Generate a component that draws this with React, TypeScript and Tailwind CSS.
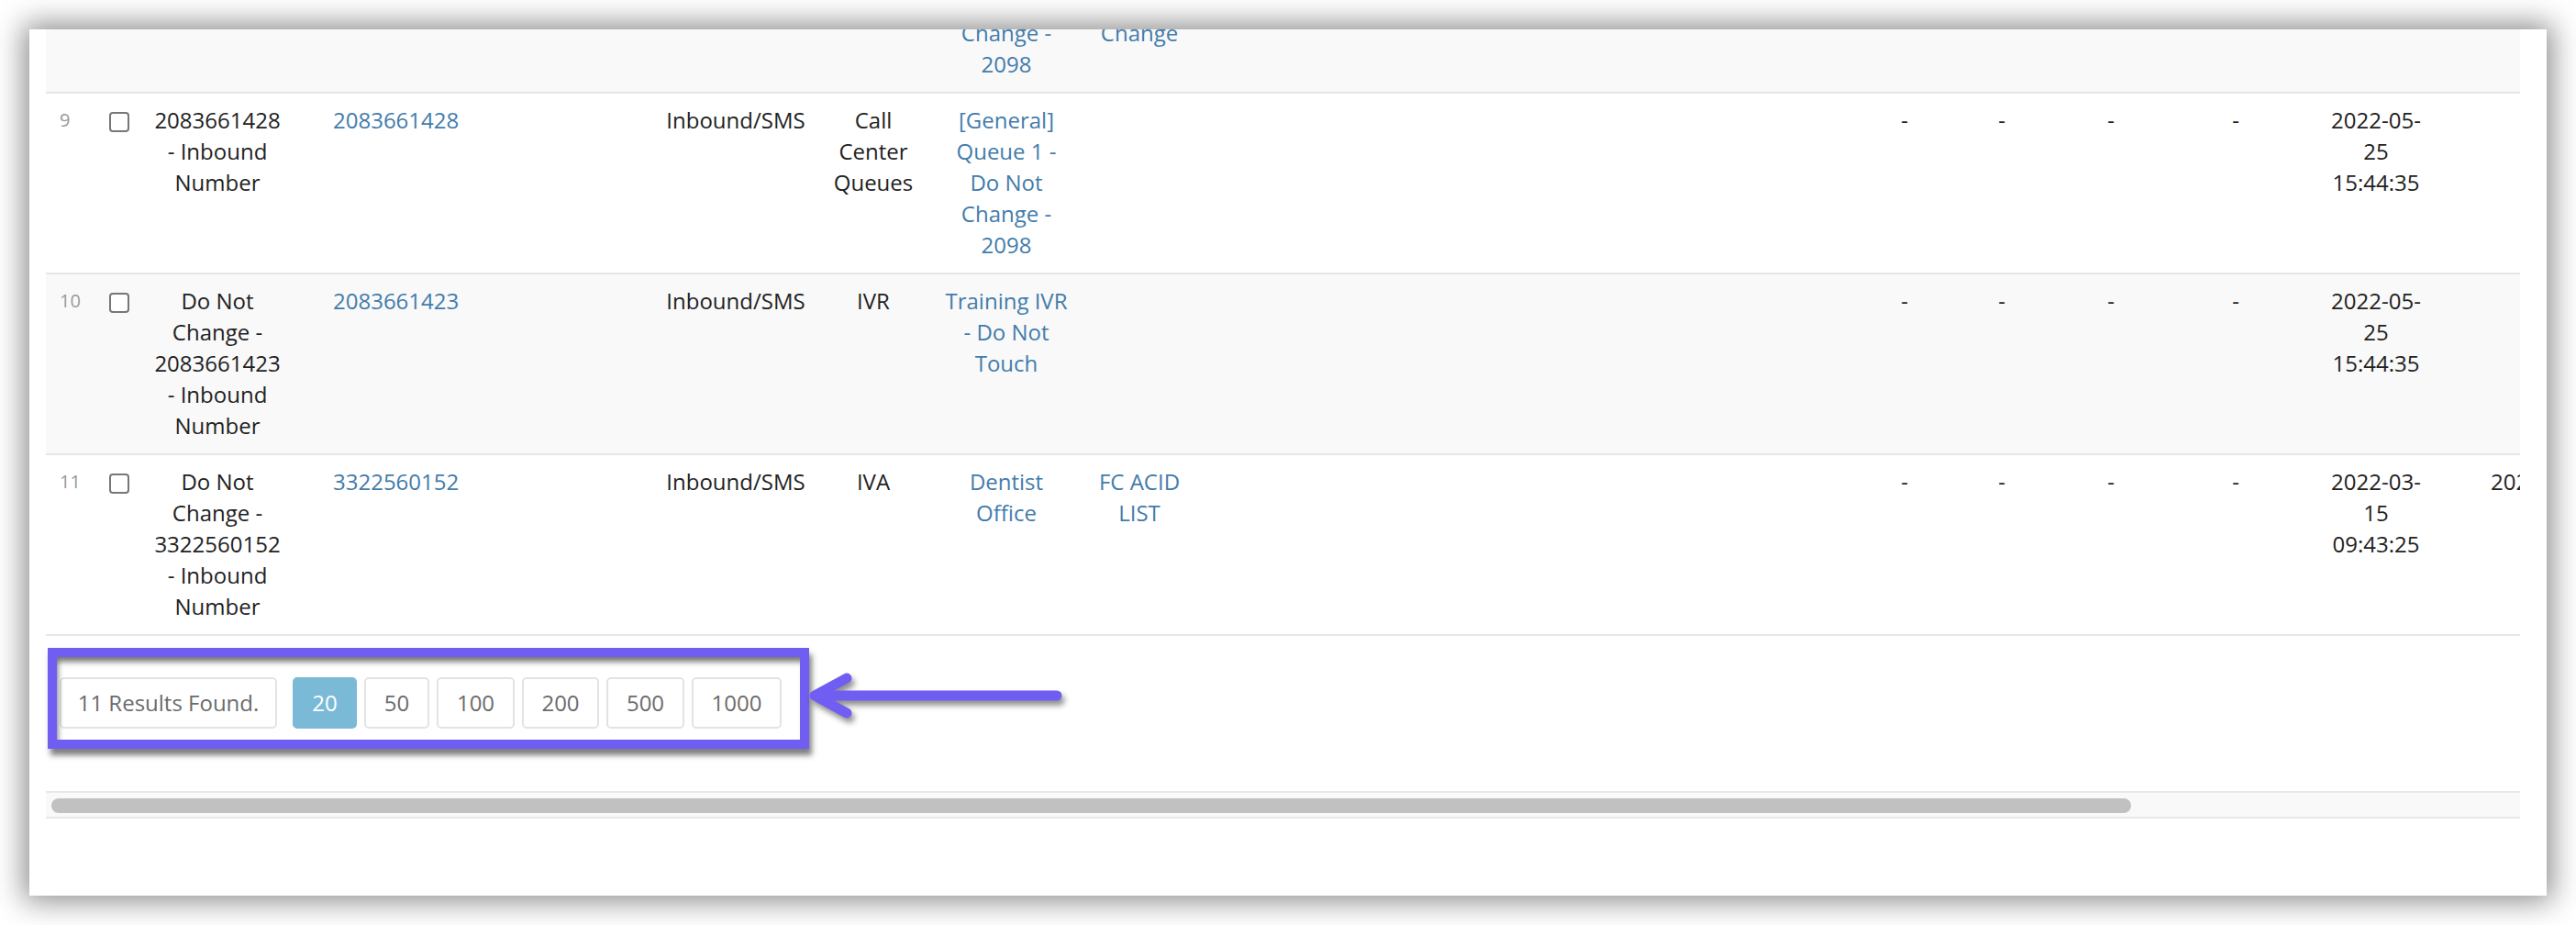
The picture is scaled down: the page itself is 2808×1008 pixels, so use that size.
type Row = {
  idx: string;
  name: string[];
  link: string;
  dir: string;
  type: string[];
  target: string[];
  list: string[];
  date: string[];
  date2: string[];
};

const rows: Row[] = [
  {
    idx: "8",
    name: ["2083661430", "- Inbound", "Number"],
    link: "2083661430",
    dir: "Inbound/SMS",
    type: ["Call", "Center", "Queues"],
    target: ["[General]", "Queue 2 -", "Do Not", "Change -", "2098"],
    list: ["[General]", "Queue 1 -", "Do Not", "Change"],
    date: ["2022-05-", "25", "15:44:35"],
    date2: [],
  },
  {
    idx: "9",
    name: ["2083661428", "- Inbound", "Number"],
    link: "2083661428",
    dir: "Inbound/SMS",
    type: ["Call", "Center", "Queues"],
    target: ["[General]", "Queue 1 -", "Do Not", "Change -", "2098"],
    list: [],
    date: ["2022-05-", "25", "15:44:35"],
    date2: [],
  },
  {
    idx: "10",
    name: ["Do Not", "Change -", "2083661423", "- Inbound", "Number"],
    link: "2083661423",
    dir: "Inbound/SMS",
    type: ["IVR"],
    target: ["Training IVR", "- Do Not", "Touch"],
    list: [],
    date: ["2022-05-", "25", "15:44:35"],
    date2: [],
  },
  {
    idx: "11",
    name: ["Do Not", "Change -", "3322560152", "- Inbound", "Number"],
    link: "3322560152",
    dir: "Inbound/SMS",
    type: ["IVA"],
    target: ["Dentist", "Office"],
    list: ["FC ACID", "LIST"],
    date: ["2022-03-", "15", "09:43:25"],
    date2: ["2022-03-15 09:43:25"],
  },
];

const pageSizes = [
  { label: "20", w: "w-[70px]", active: true },
  { label: "50", w: "w-[71px]", active: false },
  { label: "100", w: "w-[85px]", active: false },
  { label: "200", w: "w-[84px]", active: false },
  { label: "500", w: "w-[85px]", active: false },
  { label: "1000", w: "w-[98px]", active: false },
];

function Lines({ lines }: { lines: string[] }) {
  return (
    <>
      {lines.map((l, i) => (
        <div key={i} className="whitespace-nowrap">
          {l}
        </div>
      ))}
    </>
  );
}

const cell = "align-top text-center pt-[12px] pb-[13px] border-b-2 border-[#e6e6e6]";

export default function App() {
  return (
    <div className="w-[2808px] h-[1008px] bg-white p-[32px] font-['Open_Sans',sans-serif]">
      <div className="h-[944px] bg-white overflow-hidden shadow-[0_0_30px_6px_rgba(0,0,0,0.45)] pl-[18px] pr-[29px]">
        {/* table, scrolled so only the end of row 8 shows */}
        <div className="overflow-hidden -mt-[127px]">
          <table className="table-fixed border-separate border-spacing-0 w-[3198px] text-[24px] leading-[34px] text-[#222]">
            <colgroup>
              <col className="w-[52px]" />
              <col className="w-[56px]" />
              <col className="w-[158px]" />
              <col className="w-[400px]" />
              <col className="w-[172px]" />
              <col className="w-[128px]" />
              <col className="w-[162px]" />
              <col className="w-[128px]" />
              <col className="w-[714px]" />
              <col className="w-[112px]" />
              <col className="w-[100px]" />
              <col className="w-[138px]" />
              <col className="w-[134px]" />
              <col className="w-[172px]" />
              <col className="w-[172px]" />
              <col className="w-[400px]" />
            </colgroup>
            <tbody>
              {rows.map((r, i) => (
                <tr key={r.idx} className={i % 2 === 0 ? "bg-[#f9f9f9]" : "bg-white"}>
                  <td className={`${cell} !text-left pl-[15px] text-[20px] text-[#999]`}>{r.idx}</td>
                  <td className={cell}>
                    <div className="w-[22px] h-[22px] mx-auto mt-[8px] border-2 border-[#777] rounded-[4px] bg-white" />
                  </td>
                  <td className={cell}>
                    <Lines lines={r.name} />
                  </td>
                  <td className={`${cell} !text-left pl-[47px] text-[#437cab]`}>{r.link}</td>
                  <td className={cell}>{r.dir}</td>
                  <td className={cell}>
                    <Lines lines={r.type} />
                  </td>
                  <td className={`${cell} text-[#437cab]`}>
                    <Lines lines={r.target} />
                  </td>
                  <td className={`${cell} text-[#437cab]`}>
                    <Lines lines={r.list} />
                  </td>
                  <td className={cell}></td>
                  <td className={cell}>-</td>
                  <td className={cell}>-</td>
                  <td className={cell}>-</td>
                  <td className={cell}>-</td>
                  <td className={cell}>
                    <Lines lines={r.date} />
                  </td>
                  <td className={`${cell} !text-left pl-[39px]`}>
                    <Lines lines={r.date2} />
                  </td>
                  <td className={cell}></td>
                </tr>
              ))}
            </tbody>
          </table>
        </div>

        {/* pagination */}
        <div className="relative pt-[45px] pb-[68px] pl-[15px]">
          <div className="flex items-center text-[24px] text-[#6b6b6b]">
            <div className="w-[237px] h-[56px] flex items-center justify-center border-2 border-[#e3e3e3] rounded-[5px]">
              11 Results Found.
            </div>
            <div className="flex gap-[8px] ml-[17px]">
              {pageSizes.map((p) => (
                <div
                  key={p.label}
                  className={`${p.w} h-[56px] flex items-center justify-center rounded-[5px] border-2 ${
                    p.active ? "bg-[#7bbad6] border-[#7bbad6] text-white" : "border-[#e3e3e3]"
                  }`}
                >
                  {p.label}
                </div>
              ))}
            </div>
          </div>

          {/* annotation */}
          <div className="absolute left-[2px] top-[13px] w-[830px] h-[110px] border-[10px] border-[#705ef3] shadow-[3px_7px_6px_rgba(0,0,0,0.5),inset_3px_7px_6px_-2px_rgba(0,0,0,0.55)]" />
          <svg
            className="absolute left-[830px] top-[30px] drop-shadow-[3px_5px_3px_rgba(0,0,0,0.45)]"
            width="300"
            height="70"
            viewBox="0 0 300 70"
          >
            <g fill="none" stroke="#705ef3" strokeWidth="11" strokeLinecap="round" strokeLinejoin="round">
              <path d="M272 35 H10" />
              <path d="M43 16 L8 35 L43 54" />
            </g>
          </svg>
        </div>

        {/* horizontal scrollbar */}
        <div className="h-[30px] border-y-2 border-[#e8e8e8] bg-[#f9f9f9] pt-[6px]">
          <div className="ml-[6px] w-[2267px] h-[16px] rounded-full bg-[#c1c1c1]" />
        </div>
      </div>
    </div>
  );
}
